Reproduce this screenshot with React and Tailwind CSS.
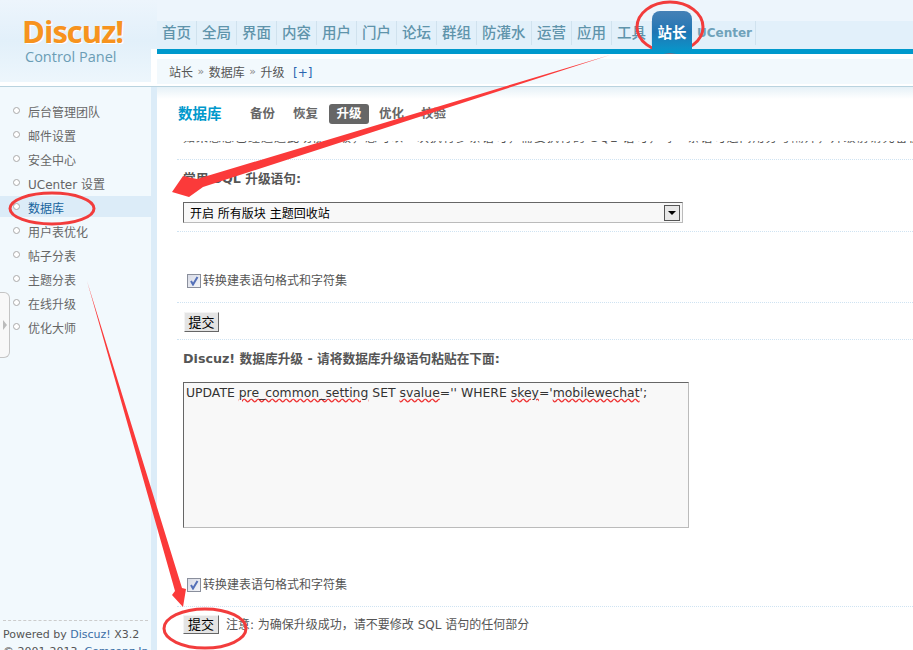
import React from 'react';

const font = { fontFamily: '"DejaVu Sans", "Noto Sans CJK SC", sans-serif' };

const navItems = ['首页', '全局', '界面', '内容', '用户', '门户', '论坛', '群组', '防灌水', '运营', '应用', '工具'];
const sideItems = ['后台管理团队', '邮件设置', '安全中心', 'UCenter 设置', '数据库', '用户表优化', '帖子分表', '主题分表', '在线升级', '优化大师'];
const tabs = ['备份', '恢复', '升级', '优化', '校验'];

const CheckRow = () => (
    <label className="flex items-center gap-[2px] pl-[10px] text-[12px] leading-none text-[#555]">
        <span className="w-[14px] h-[14px] border border-[#8a8f9c] bg-gradient-to-br from-[#d8dbe6] to-[#f4f5f8] flex items-center justify-center">
            <svg width="10" height="10" viewBox="0 0 10 10">
                <path d="M2 5 L4 8.5 L8.5 1" fill="none" stroke="#5470b8" strokeWidth="2" />
            </svg>
        </span>
        转换建表语句格式和字符集
    </label>
);

const SubmitBtn = ({ className }) => (
    <button className={`bg-[#e4e4e4] border border-[#f4f4f4] border-r-[#666] border-b-[#666] text-[13px] leading-none text-black flex items-center justify-center ${className}`}>
        提交
    </button>
);

// Red annotations drawn on top of the screenshot
const Annotations = () => (
    <svg className="absolute inset-0 pointer-events-none" width="913" height="650" viewBox="0 0 913 650">
        <ellipse cx="670" cy="27" rx="33" ry="25" fill="none" stroke="#f23c3c" strokeWidth="3" />
        <ellipse cx="52" cy="208.5" rx="42" ry="15.5" fill="none" stroke="#f23c3c" strokeWidth="3" />
        <ellipse cx="205" cy="628.5" rx="41" ry="19.5" fill="none" stroke="#f23c3c" strokeWidth="3" />
        <path d="M610 55 L197 179 L183 176 L172 192 L189 197 L203 187 Z" fill="#fb3a3a" />
        <path d="M87 281 L182 588 L186 589 L183 607 L172 595 L175 591 Z" fill="#fb3a3a" />
    </svg>
);

export default function App() {
    return (
        <div className="relative w-[913px] h-[650px] overflow-hidden bg-white flex flex-col" style={font}>
            {/* Header */}
            <header className="h-[87px] shrink-0 flex bg-[#edf5fc] relative">
                <div className="relative w-[157px] shrink-0 flex flex-col">
                    <div className="h-[82px] pt-[15px] pl-[22px] bg-gradient-to-b from-[#edf5fc] via-[#e2f0fa] to-[#edf6fc]">
                        <div className="text-[31px] leading-[32px] font-bold text-[#f7931e] tracking-[-1px] [text-shadow:1px_1px_0_#fff]" style={{ fontFamily: '"Open Sans", sans-serif' }}>Discuz!</div>
                        <div className="text-[14.5px] leading-[16px] mt-[2px] ml-[3px] text-[#6b9db5]" style={{ fontFamily: '"Open Sans", sans-serif' }}>Control Panel</div>
                    </div>
                    <div className="h-[4px] bg-white" />
                    <div className="h-px bg-[#b9d3df]" />
                    <div className="absolute right-0 top-[49px] w-[6px] h-[37px] bg-white" />
                </div>
                <div className="flex-1 flex flex-col min-w-0">
                    <div className="h-[21px] bg-[#edf5fc]" />
                    <nav className="h-[28px] bg-[#e2f0fa] flex items-start text-[14.5px] text-[#5f94ab]">
                        {navItems.map((n) => (
                            <span key={n} className={`${n === '防灌水' ? 'w-[55px]' : 'w-[40px]'} pl-[5px] h-[24px] leading-[24px] border-r border-[#d0e2ee] font-medium whitespace-nowrap`}>{n}</span>
                        ))}
                        <span className="relative w-[40px] h-[24px] z-10">
                            <span className="absolute left-0 -top-[10px] w-[40px] h-[42px] rounded-t-[8px] bg-gradient-to-b from-[#4480b6] via-[#1d76b4] to-[#0099cc] text-white font-bold text-center leading-[44px]">站长</span>
                        </span>
                        <span className="pl-[5px] pr-[3px] h-[24px] leading-[24px] border-r border-[#d0e2ee] text-[12px] font-bold text-[#6fa2ba]">UCenter</span>
                    </nav>
                    <div className="h-[5px] bg-[#0099cc]" />
                    <div className="h-[5px] bg-white" />
                    <div className="h-[25px] bg-[#f2f9fd] flex items-center pt-[2px] pl-[12px] gap-[4.5px] text-[12px] text-[#555]">
                        站长 <span className="text-[11px] text-[#888]">»</span> 数据库 <span className="text-[11px] text-[#888]">»</span> 升级
                        <span className="ml-[4px] text-[#2a65b0]">[+]</span>
                    </div>
                    <div className="h-[2px] bg-white" />
                    <div className="h-px bg-[#b9d3df]" />
                </div>
            </header>

            <div className="flex-1 flex min-h-0">
                {/* Sidebar */}
                <aside className="relative w-[157px] shrink-0 flex flex-col bg-[#f2f9fd] border-r-[6px] border-[#dcecf8]">
                    <ul className="pt-[13px] text-[12px]">
                        {sideItems.map((s) => (
                            <li key={s} className="h-[24px]">
                                <div className={`h-[21px] pt-[5px] flex items-center pl-[13px] gap-[8px] ${s === '数据库' ? 'bg-[#dcecf8] text-[#17649e]' : 'text-[#666]'}`}>
                                    <span className="w-[7px] h-[7px] rounded-full border border-[#aaa] bg-white -mt-[6px]" />
                                    {s}
                                </div>
                            </li>
                        ))}
                    </ul>
                    <div className="mt-auto h-[30px] overflow-hidden mx-[3px] border-t border-dashed border-[#ccc] pt-[5px] text-[11px] leading-[17px] text-[#555] whitespace-nowrap">
                        <div>Powered by <span className="text-[#3a6ea5]">Discuz!</span> X3.2</div>
                        <div>© 2001-2013, <span className="text-[#3a6ea5]">Comsenz Inc.</span></div>
                    </div>
                    {/* Collapse handle */}
                    <div className="absolute left-0 top-[205px] w-[10px] h-[66px] bg-[#f8f8f8] border border-l-0 border-[#c4c4c4] rounded-r-[6px] flex items-center">
                        <span className="border-y-[5px] border-y-transparent border-l-[4px] border-l-[#bbb] ml-[3px]" />
                    </div>
                </aside>

                {/* Main content */}
                <main className="flex-1 min-w-0 bg-gradient-to-b from-[#e6f1f7] to-white to-[12px] pl-[20px] text-[12px] text-[#555]">
                    <div className="h-[54px] flex items-start pt-[17px]">
                        <h2 className="w-[73px] pl-[1px] text-[14.5px] leading-[20px] font-bold text-[#0099cc]">数据库</h2>
                        <div className="flex items-center text-[12.5px] font-bold text-[#666] leading-[20px]">
                            {tabs.map((t, i) => (
                                <span key={t} className={t === '升级' ? 'w-[40px] h-[20px] rounded-[3px] bg-[#666] text-white text-center ml-[11px] mr-[10px]' : i === 3 ? 'w-[25px] mr-[17px] text-center' : i === 0 ? 'w-[25px] mr-[18px] text-center' : 'w-[25px] text-center'}>{t}</span>
                            ))}
                        </div>
                    </div>
                    <div className="h-[19px] overflow-hidden border-b border-dotted border-[#cfe3f2] whitespace-nowrap">
                        <div className="-mt-[11px] pl-[6px] leading-[16px] tracking-[1px]">如果您想已经通过此功能升级，您可以一次执行多条语句，需要执行的 SQL 语句，每一条语句之间用分号隔开，升级前请先备份数据库</div>
                    </div>
                    <div className="h-[72px] border-b border-dotted border-[#cfe3f2] pl-[6px] pt-[11px]">
                        <div className="text-[12.7px] font-bold leading-[16px]">常用 SQL 升级语句:</div>
                        <div className="mt-[15px] w-[500px] h-[21px] bg-[#f8f8f8] border border-[#bbb] border-t-[#666] border-l-[#666] flex items-center justify-between pl-[6px] pr-[2px] text-black">
                            <span className="pt-[2px]">开启 所有版块 主题回收站</span>
                            <span className="w-[16px] h-[16px] border border-[#555] bg-[#e8e8e8] flex items-center justify-center">
                                <span className="border-x-[4px] border-x-transparent border-t-[4px] border-t-black" />
                            </span>
                        </div>
                    </div>
                    <div className="h-[71px] border-b border-dotted border-[#cfe3f2] pt-[42px]">
                        <CheckRow />
                    </div>
                    <div className="h-[37px] border-b border-dotted border-[#cfe3f2] pt-[9px] pl-[7px]">
                        <SubmitBtn className="w-[35px] h-[20px]" />
                    </div>
                    <div className="pl-[6px]">
                        <div className="mt-[11px] text-[12.7px] font-bold leading-[16px]">Discuz! 数据库升级 - 请将数据库升级语句粘贴在下面:</div>
                        <div className="mt-[15px] w-[506px] h-[146px] bg-[#f8f8f8] border border-[#bbb] border-t-[#666] border-l-[#666] px-[2px] pt-[2px] text-[12.4px] leading-[16px] text-[#333]">
                            UPDATE <span className="underline decoration-wavy decoration-[#e33]">pre_common_setting</span> SET <span className="underline decoration-wavy decoration-[#e33]">svalue</span>='' WHERE <span className="underline decoration-wavy decoration-[#e33]">skey</span>='<span className="underline decoration-wavy decoration-[#e33]">mobilewechat</span>';
                        </div>
                    </div>
                    <div className="h-[79px] border-b border-dotted border-[#cfe3f2] pt-[50px]">
                        <CheckRow />
                    </div>
                    <div className="flex items-center pt-[8px] pl-[6px] gap-[7px]">
                        <SubmitBtn className="w-[36px] h-[19px]" />
                        <span className="leading-[16px]">注意: 为确保升级成功，请不要修改 SQL 语句的任何部分</span>
                    </div>
                </main>
            </div>
            <Annotations />
        </div>
    );
}
